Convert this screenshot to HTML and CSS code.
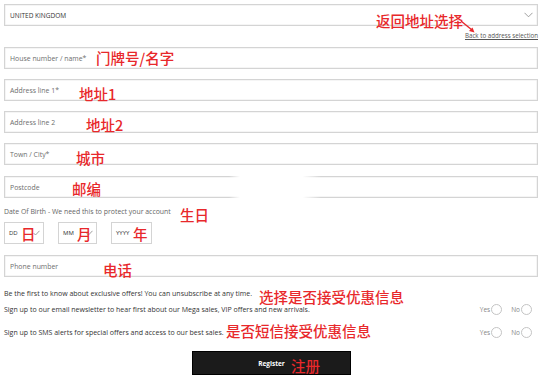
FILE: index.html
```html
<!DOCTYPE html>
<html lang="en">
<head>
<meta charset="utf-8">
<title>Register</title>
<link rel="stylesheet" href="styles.css">
</head>
<body>
<div class="page">
  <div class="field select">
    <span class="value">UNITED KINGDOM</span>
    <svg class="chev" width="9" height="6" viewBox="0 0 9 6"><polyline points="0.5,0.8 4.5,4.8 8.5,0.8" fill="none" stroke="#888" stroke-width="0.8"/></svg>
  </div>
  <div class="backrow"><a class="back" href="#">Back to address selection</a></div>

  <div class="field"><span class="ph">House number / name*</span></div>
  <div class="field"><span class="ph">Address line 1*</span></div>
  <div class="field"><span class="ph">Address line 2</span></div>
  <div class="field town"><span class="ph">Town / City*</span></div>
  <div class="field postcode"><span class="ph">Postcode</span><span class="gap-patch"></span></div>

  <div class="dob-label">Date Of Birth - We need this to protect your account</div>
  <div class="dob">
    <div class="dbox dd"><span class="ph">DD</span><svg class="tick" width="7" height="6" viewBox="0 0 7 6"><polyline points="0.5,3 2.5,5 6.5,0.8" fill="none" stroke="#888" stroke-width="0.8"/></svg></div>
    <div class="dbox mm"><span class="ph">MM</span><svg class="tick" width="7" height="6" viewBox="0 0 7 6"><polyline points="0.5,3 2.5,5 6.5,0.8" fill="none" stroke="#888" stroke-width="0.8"/></svg></div>
    <div class="dbox yy"><span class="ph">YYYY</span></div>
  </div>

  <div class="field phone"><span class="ph">Phone number</span></div>

  <div class="offers">
    <div class="row"><span>Be the first to know about exclusive offers! You can unsubscribe at any time.</span></div>
    <div class="row">
      <span>Sign up to our email newsletter to hear first about our Mega sales, VIP offers and new arrivals.</span>
      <span class="radios"><span class="opt">Yes<i class="radio"></i></span><span class="opt">No<i class="radio"></i></span></span>
    </div>
  </div>
  <div class="row sms">
    <span>Sign up to SMS alerts for special offers and access to our best sales.</span>
    <span class="radios"><span class="opt">Yes<i class="radio"></i></span><span class="opt">No<i class="radio"></i></span></span>
  </div>

  <div class="btnrow"><button class="register">Register</button></div>

  <span class="note n-back">返回地址选择</span>
  <svg class="arrow" width="16" height="14" viewBox="0 0 16 14"><line x1="1" y1="1" x2="12" y2="10" stroke="#e8282b" stroke-width="1.4"/><polygon points="14.5,12.5 9,11 12.5,7.5" fill="#e8282b"/></svg>
  <span class="note n-house">门牌号/名字</span>
  <span class="note n-a1">地址1</span>
  <span class="note n-a2">地址2</span>
  <span class="note n-town">城市</span>
  <span class="note n-post">邮编</span>
  <span class="note n-dob">生日</span>
  <span class="note n-dd">日</span>
  <span class="note n-mm">月</span>
  <span class="note n-yy">年</span>
  <span class="note n-phone">电话</span>
  <span class="note n-offer">选择是否接受优惠信息</span>
  <span class="note n-sms">是否短信接受优惠信息</span>
  <span class="note n-reg">注册</span>
</div>
</body>
</html>
```

FILE: styles.css
```css
html, body {
  margin: 0;
  padding: 0;
  background: #ffffff;
}
body {
  font-family: "Open Sans", "Noto Sans", sans-serif;
  color: #555;
}
.page {
  position: relative;
  width: 540px;
  height: 378px;
  overflow: hidden;
  box-sizing: border-box;
  padding: 4px 2px 0 4px;
}
.field {
  position: relative;
  height: 22px;
  box-sizing: border-box;
  border: 1px solid #d4d4d4;
  box-shadow: inset 0 0 0 0.5px #ececec;
  display: flex;
  align-items: center;
  padding-left: 5px;
  margin-bottom: 10px;
}
.select {
  margin-bottom: 0;
  justify-content: space-between;
  padding-right: 4px;
}
.value {
  font-size: 6.5px;
  color: #333;
}
.chev {
  display: block;
}
.backrow {
  height: 21px;
  display: flex;
  justify-content: flex-end;
  align-items: flex-start;
  padding-top: 5px;
  box-sizing: border-box;
}
.back {
  font-size: 6.2px;
  line-height: 9px;
  color: #555;
  text-decoration: underline;
}
.ph {
  font-size: 6.9px;
  color: #6e6e6e;
}
.town {
  margin-bottom: 11px;
}
.postcode {
  margin-bottom: 0;
}
.gap-patch {
  position: absolute;
  left: 224px;
  top: -2px;
  width: 92px;
  height: 25px;
  background: linear-gradient(90deg, rgba(255,255,255,0), #fff 12%, #fff 80%, rgba(255,255,255,0));
}
.dob-label {
  margin-top: 9px;
  font-size: 6.9px;
  line-height: 10px;
  color: #666;
}
.dob {
  margin-top: 5px;
  display: flex;
  gap: 14px;
}
.dbox {
  height: 22px;
  box-sizing: border-box;
  border: 1px solid #d4d4d4;
  display: flex;
  align-items: center;
  justify-content: space-between;
  padding: 0 3px 0 4px;
}
.dbox .ph {
  font-size: 6px;
  color: #333;
}
.dd { width: 40px; }
.mm { width: 39px; }
.yy { width: 41px; }
.tick { display: block; }
.phone {
  margin-top: 11px;
  margin-bottom: 0;
}
.offers {
  margin-top: 8px;
}
.row {
  display: flex;
  justify-content: space-between;
  align-items: center;
  height: 16px;
  font-size: 7px;
  color: #333;
  padding-right: 6px;
}
.sms {
  margin-top: 7px;
}
.radios {
  display: flex;
  gap: 9px;
}
.opt {
  display: flex;
  align-items: center;
  gap: 1px;
  font-size: 6.5px;
  color: #888;
}
.radio {
  display: block;
  width: 11px;
  height: 11px;
  box-sizing: border-box;
  border: 1px solid #c4c4c4;
  border-radius: 50%;
}
.btnrow {
  margin-top: 11px;
  display: flex;
  padding-left: 188px;
}
.register {
  width: 159px;
  height: 24px;
  background: #1b1b1b;
  border: 1px solid #000;
  color: #fff;
  font-family: "Open Sans", sans-serif;
  font-weight: 700;
  font-size: 6.5px;
  padding: 0;
}
.note {
  position: absolute;
  font-family: "Noto Sans CJK SC", sans-serif;
  font-weight: 500;
  font-size: 14.5px;
  line-height: 16px;
  color: #e8282b;
  white-space: nowrap;
}
.arrow { position: absolute; left: 460px; top: 20px; }
.n-back { left: 376px; top: 13px; }
.n-house { left: 96px; top: 50px; }
.n-a1 { left: 79px; top: 86px; }
.n-a2 { left: 86px; top: 117px; }
.n-town { left: 76px; top: 150px; }
.n-post { left: 72px; top: 181px; }
.n-dob { left: 180px; top: 207px; }
.n-dd { left: 21px; top: 226px; }
.n-mm { left: 77px; top: 226px; }
.n-yy { left: 133px; top: 226px; }
.n-phone { left: 103px; top: 262px; }
.n-offer { left: 259px; top: 289px; }
.n-sms { left: 226px; top: 323px; }
.n-reg { left: 291px; top: 358px; }
```
